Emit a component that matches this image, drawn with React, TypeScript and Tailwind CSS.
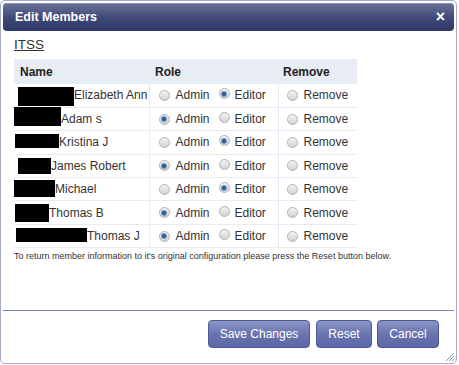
import React from "react";

type Row = { name: string; box: [number, number, number, number]; role: "admin" | "editor" };
// box: [marginLeft, width, height, offsetY]
const rows: Row[] = [
  { name: "Elizabeth Ann", box: [4, 56, 19, 1], role: "editor" },
  { name: "Adam s", box: [0, 47, 19, -3], role: "admin" },
  { name: "Kristina J", box: [1, 44, 14, -1], role: "editor" },
  { name: "James Robert", box: [4, 33, 16, 0], role: "admin" },
  { name: "Michael", box: [0, 41, 17, -1], role: "editor" },
  { name: "Thomas B", box: [1, 34, 18, 0], role: "admin" },
  { name: "Thomas J", box: [2, 71, 14, -1], role: "admin" },
];

function Radio({ checked }: { checked?: boolean }) {
  return (
    <span className="relative inline-block w-[11px] h-[11px] rounded-full border border-[#b4b4b4] bg-[linear-gradient(#f4f4f4,#d2d2d2)] shrink-0">
      {checked && (
        <span className="absolute left-[2.5px] top-[2.5px] w-[4px] h-[4px] rounded-full bg-[#1c5f9e] shadow-[0_0_0_1px_#7f9cb8]" />
      )}
    </span>
  );
}

export default function App() {
  const font = { fontFamily: '"Liberation Sans", Arial, sans-serif' };
  return (
    <div className="w-[459px] h-[365px] bg-white text-[#222]" style={font}>
      <div className="relative w-[457px] h-[364px] border border-[#a4abc8] rounded-[5px] p-[2px] flex flex-col bg-white">
        <div className="h-[28px] rounded-[4px] bg-[linear-gradient(#6b7199,#3f4877_55%,#2e3866)] flex items-center justify-between pl-[12px] pr-[9px] shadow-[inset_0_1px_0_#8a90b3]">
          <span className="text-white font-bold text-[12.5px]">Edit Members</span>
          <span className="text-white font-bold text-[16px] leading-none">×</span>
        </div>
        <div className="px-[11px]">
          <div className="mt-[6px] text-[13.5px] leading-[16px] underline text-[#333]">ITSS</div>
          <table className="mt-[6px] border-collapse text-[12px]">
            <thead>
              <tr className="bg-[#e8ecf4] h-[25px]">
                <th className="w-[135px] text-left font-bold pl-[6px] p-0">Name</th>
                <th className="w-[129px] text-left font-bold pl-[6px] p-0">Role</th>
                <th className="w-[79px] text-left font-bold pl-[5px] p-0">Remove</th>
              </tr>
            </thead>
            <tbody>
              {rows.map((r, i) => (
                <tr key={i} className="h-[23.4px] border-b border-[#e6ebf5]">
                  <td className="p-0 border-r border-[#e6ebf5]">
                    <div className="flex items-center">
                      <span
                        className="inline-block bg-black shrink-0"
                        style={{ marginLeft: r.box[0], width: r.box[1], height: r.box[2], transform: `translateY(${r.box[3]}px)` }}
                      />
                      <span className="text-[#333]">{r.name}</span>
                    </div>
                  </td>
                  <td className="p-0 border-r border-[#e6ebf5]">
                    <div className="flex items-center pl-[9px] text-[#333]">
                      <Radio checked={r.role === "admin"} />
                      <span className="ml-[6px]">Admin</span>
                      <span className="ml-[9px]"><Radio checked={r.role === "editor"} /></span>
                      <span className="ml-[5px]">Editor</span>
                    </div>
                  </td>
                  <td className="p-0">
                    <div className="flex items-center pl-[8px] text-[#333]">
                      <Radio />
                      <span className="ml-[6px]">Remove</span>
                    </div>
                  </td>
                </tr>
              ))}
            </tbody>
          </table>
          <div className="mt-[3px] text-[9px] leading-[11px] text-[#333]">
            To return member information to it's original configuration please press the Reset button below.
          </div>
        </div>
        <div className="flex-1" />
        <div className="border-t border-[#7d86b6] h-[51px] flex items-start justify-end pt-[9px] pr-[15px] gap-[5px]">
          <button className="h-[28px] w-[102px] rounded-[4px] border border-[#4f5994] bg-[linear-gradient(#8c95c8,#6a74b0_50%,#5c67a7)] text-white text-[12px]">Save Changes</button>
          <button className="h-[28px] w-[56px] rounded-[4px] border border-[#4f5994] bg-[linear-gradient(#8c95c8,#6a74b0_50%,#5c67a7)] text-white text-[12px] ml-[1px]">Reset</button>
          <button className="h-[28px] w-[62px] rounded-[4px] border border-[#4f5994] bg-[linear-gradient(#8c95c8,#6a74b0_50%,#5c67a7)] text-white text-[12px]">Cancel</button>
        </div>
        <svg className="absolute right-[2px] bottom-[2px]" width="9" height="9" viewBox="0 0 9 9">
          <path d="M9 1 L1 9 M9 4 L4 9 M9 7 L7 9" stroke="#8d96bd" strokeWidth="1" />
        </svg>
      </div>
    </div>
  );
}
